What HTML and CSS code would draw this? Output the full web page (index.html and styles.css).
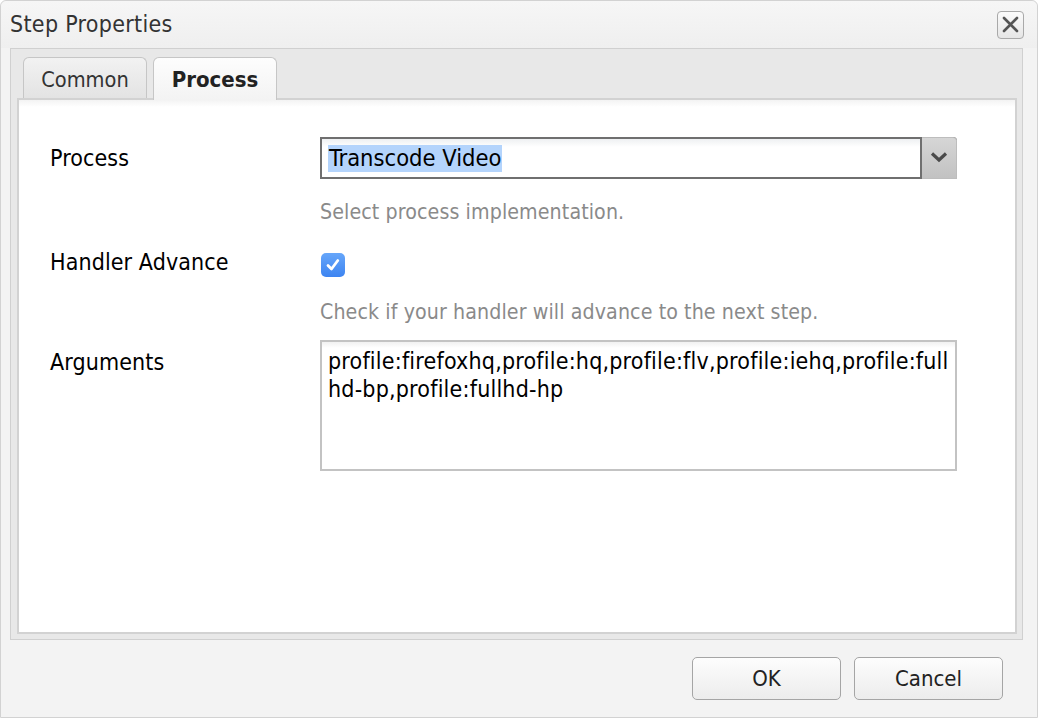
FILE: index.html
```html
<!DOCTYPE html>
<html>
<head>
<meta charset="utf-8">
<title>Step Properties</title>
<link rel="stylesheet" href="styles.css">
</head>
<body>
<div class="dialog">
  <div class="header">
    <span class="title">Step Properties</span>
    <button class="close" aria-label="Close">
      <svg width="19" height="19" viewBox="0 0 19 19"><path d="M3 3 L16 16 M16 3 L3 16" stroke="#555" stroke-width="2.6" stroke-linecap="round" fill="none"/></svg>
    </button>
  </div>
  <div class="tabpanel">
    <div class="tabs">
      <div class="tab">Common</div>
      <div class="tab active">Process</div>
    </div>
    <div class="content">
      <div class="row row-process">
        <div class="label">Process</div>
        <div class="field">
          <div class="select">
            <span class="value"><span class="selected-text">Transcode Video</span></span>
            <span class="arrow"><svg width="20" height="12" viewBox="0 0 20 12"><path d="M3 2.5 L10 9 L17 2.5" stroke="#4a4a4a" stroke-width="3.2" fill="none" stroke-linejoin="miter"/></svg></span>
          </div>
          <div class="help">Select process implementation.</div>
        </div>
      </div>
      <div class="row row-handler">
        <div class="label">Handler Advance</div>
        <div class="field">
          <span class="checkbox"><svg width="18" height="18" viewBox="0 0 18 18"><path d="M4 9.5 L7.5 13 L13.8 4.5" stroke="#fff" stroke-width="2.8" fill="none" stroke-linecap="round" stroke-linejoin="round"/></svg></span>
          <div class="help help-check">Check if your handler will advance to the next step.</div>
        </div>
      </div>
      <div class="row row-args">
        <div class="label">Arguments</div>
        <div class="field">
          <div class="textarea">profile:firefoxhq,profile:hq,profile:flv,profile:iehq,profile:full<br>hd-bp,profile:fullhd-hp</div>
        </div>
      </div>
    </div>
  </div>
  <div class="footer">
    <button class="btn">OK</button>
    <button class="btn">Cancel</button>
  </div>
</div>
</body>
</html>
```
FILE: styles.css
```css
* { box-sizing: border-box; }
html, body { margin: 0; padding: 0; background: #ffffff; }
body {
  font-family: "DejaVu Sans Condensed", "DejaVu Sans", sans-serif;
  font-size: 22px;
  color: #111;
}
.dialog {
  width: 1038px;
  height: 718px;
  border: 1px solid #d2d2d2;
  border-radius: 6px 6px 0 0;
  background: #f3f3f3;
  display: flex;
  flex-direction: column;
}
.header {
  height: 47px;
  display: flex;
  align-items: center;
  justify-content: space-between;
  padding: 0 13px 0 9px;
  background: linear-gradient(#f6f6f6, #efefef);
  border-radius: 6px 6px 0 0;
}
.title {
  color: #333;
  font-size: 23px;
  letter-spacing: 0.3px;
  margin-top: -1px;
}
.close {
  width: 27px;
  height: 28px;
  padding: 0;
  border: 1px solid #a9a9a9;
  border-radius: 4px;
  background: linear-gradient(#fbfbfb, #e6e6e6);
  display: flex;
  align-items: center;
  justify-content: center;
}
.tabpanel {
  margin: 0 14px 0 9px;
  height: 592px;
  border: 1px solid #d0d0d0;
  background: #e8e8e8;
  padding: 0 5px 5px 6px;
  display: flex;
  flex-direction: column;
}
.tabs {
  height: 49px;
  display: flex;
  align-items: flex-end;
  gap: 6px;
  padding-left: 6px;
}
.tab {
  width: 124px;
  height: 41px;
  border: 1px solid #c6c6c6;
  border-bottom: none;
  border-radius: 6px 6px 0 0;
  background: linear-gradient(#f2f2f2, #e3e3e3);
  color: #333;
  display: flex;
  align-items: center;
  justify-content: center;
  padding-top: 2px;
  font-size: 21.6px;
}
.tab.active {
  height: 43px;
  margin-bottom: -2px;
  background: linear-gradient(#fdfdfd, #f3f3f3);
  font-weight: bold;
  color: #222;
  position: relative;
  z-index: 1;
  padding-top: 0;
  font-size: 22px;
}
.content {
  height: 536px;
  border: 2px solid #d2d2d2;
  background: linear-gradient(#f3f3f3, #ffffff 7px);
  padding: 37px 0 0 31px;
}
.row {
  display: grid;
  grid-template-columns: 270px 637px;
}
.label {
  line-height: 26px;
  color: #000;
  font-size: 23px;
  letter-spacing: 0.1px;
}
.row-process .label { padding-top: 8px; }
.row-handler { margin-top: 28px; }
.row-handler .label { margin-top: -4px; }
.row-args { margin-top: 15px; }
.row-args .label { padding-top: 9px; }
.select {
  height: 42px;
  display: flex;
  border: 2px solid #6f6f6f;
  border-right: none;
  border-radius: 0 4px 0 0;
  background: #fff;
}
.value {
  flex: 1;
  display: flex;
  align-items: center;
  padding-left: 6px;
  border-right: 2px solid #6f6f6f;
  background: linear-gradient(#eef0f2, #ffffff 8px);
}
.selected-text {
  background: #b4d4fc;
  color: #000;
  line-height: 27px;
  padding: 0 1px;
  font-size: 23.5px;
}
.arrow {
  width: 35px;
  margin-top: -2px;
  margin-bottom: -2px;
  border: 1px solid #bdbdbd;
  border-left: none;
  border-radius: 0 4px 0 0;
  background: linear-gradient(#d6d6d6, #c2c2c2);
  display: flex;
  align-items: center;
  justify-content: center;
  padding-bottom: 3px;
}
.help {
  margin-top: 20px;
  line-height: 26px;
  color: #8a8a8a;
  font-size: 21.2px;
  letter-spacing: 0.1px;
}
.checkbox {
  display: flex;
  width: 24px;
  height: 24px;
  margin-left: 1px;
  border-radius: 5px;
  background: linear-gradient(#66a6fa, #3d84f1);
  align-items: center;
  justify-content: center;
}
.help-check { margin-top: 22px; }
.textarea {
  height: 131px;
  border: 2px solid #c3c3c3;
  padding: 5px 6px;
  line-height: 28px;
  color: #000;
  font-size: 23px;
  letter-spacing: 0.2px;
  background: linear-gradient(#f1f1f1, #ffffff 6px);
  white-space: nowrap;
  overflow: hidden;
}
.footer {
  flex: 1;
  display: flex;
  justify-content: flex-end;
  align-items: flex-start;
  gap: 13px;
  padding: 17px 34px 0 0;
}
.btn {
  width: 149px;
  height: 43px;
  border: 1px solid #a5a5a5;
  border-radius: 5px;
  background: linear-gradient(#fdfdfd, #ececec);
  font-family: "DejaVu Sans Condensed", "DejaVu Sans", sans-serif;
  font-size: 22px;
  color: #222;
  padding: 0;
}
```
